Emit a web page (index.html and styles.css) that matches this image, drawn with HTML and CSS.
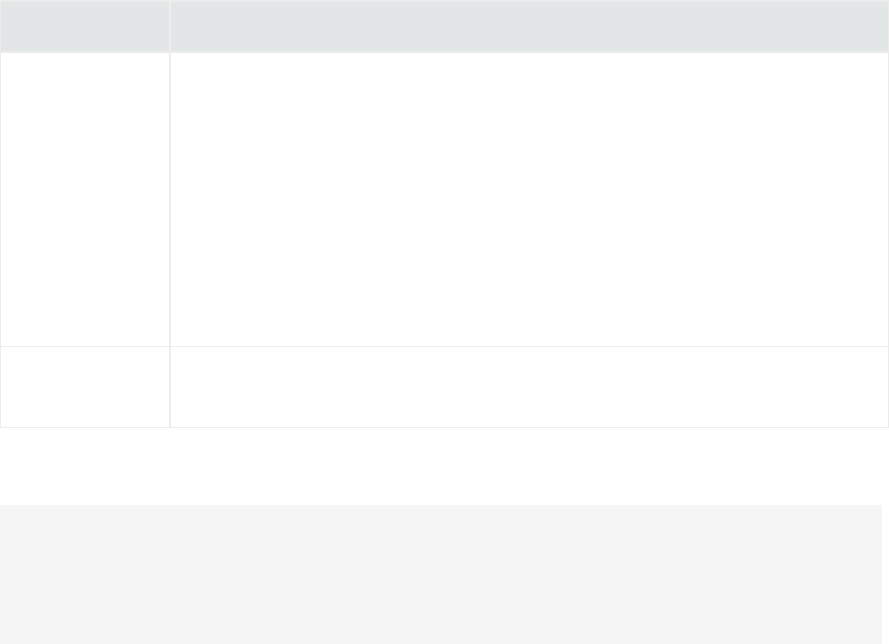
FILE: index.html
```html
<!DOCTYPE html>
<html lang="en">
<head>
<meta charset="utf-8">
<title>Table</title>
<link rel="stylesheet" href="styles.css">
</head>
<body>
<div class="table">
  <div class="row head">
    <div class="cell first"></div>
    <div class="cell"></div>
  </div>
  <div class="row body tall">
    <div class="cell first"></div>
    <div class="cell"></div>
  </div>
  <div class="row body short">
    <div class="cell first"></div>
    <div class="cell"></div>
  </div>
</div>
<div class="panel"></div>
</body>
</html>
```
FILE: styles.css
```css
html, body {
  margin: 0;
  padding: 0;
  background: #ffffff;
  font-family: "Liberation Sans", Arial, sans-serif;
}
.table {
  width: 889px;
  box-sizing: border-box;
  border: 1px solid #ececec;
  border-top-width: 2px;
}
.row {
  display: grid;
  grid-template-columns: 170px 1fr;
}
.cell {
  box-sizing: border-box;
}
.cell.first {
  border-right: 2px solid #eeeeee;
}
.head {
  height: 49px;
  background: #e3e6e6;
  border-bottom: 2px solid #ececec;
}
.tall {
  height: 293px;
  border-bottom: 1px solid #ececec;
}
.short {
  height: 80px;
}
.panel {
  margin-top: 77px;
  width: 882px;
  height: 160px;
  background: #f5f5f5;
}
```
